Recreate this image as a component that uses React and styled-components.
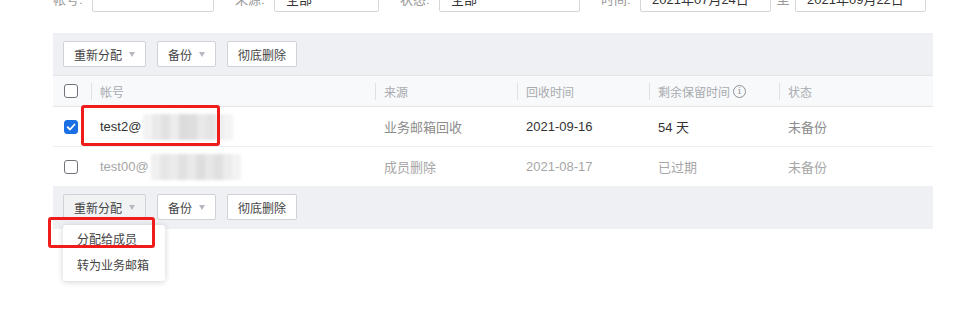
import React from 'react';
import styled, { createGlobalStyle } from 'styled-components';

const Global = createGlobalStyle`
  html, body { margin: 0; padding: 0; background: #fff; }
  body {
    font-family: "Liberation Sans", "Noto Sans CJK SC", sans-serif;
    overflow: hidden;
  }
`;

const Page = styled.div`
  width: 975px;
  height: 317px;
  padding-left: 53px;
  box-sizing: border-box;
  overflow: hidden;
`;

const FilterBar = styled.div`
  display: flex;
  align-items: center;
  height: 28px;
  margin-top: -16px;
`;

const Field = styled.div`
  display: flex;
  align-items: center;
  margin-right: 21px;
`;

const FieldLabel = styled.span`
  width: 39px;
  flex-shrink: 0;
  font-size: 13px;
  color: #999;
`;

const Input = styled.div`
  position: relative;
  box-sizing: border-box;
  width: ${(p) => p.$w}px;
  height: 28px;
  border: 1px solid #d3d6db;
  border-radius: 2px;
  padding-left: 11px;
  display: flex;
  align-items: center;
  font-size: 13px;
  color: #333;
  ${(p) =>
    p.$select &&
    `
    &::after {
      content: "";
      position: absolute;
      right: 12px;
      top: 11px;
      border-left: 3px solid transparent;
      border-right: 3px solid transparent;
      border-top: 4px solid #bbb;
    }
  `}
`;

const RangeSep = styled.span`
  width: 24px;
  text-align: center;
  font-size: 13px;
  color: #999;
`;

const Panel = styled.div`
  position: relative;
  width: 880px;
  margin-top: 21px;
`;

const Toolbar = styled.div`
  display: flex;
  gap: 11px;
  background: #eff0f3;
  padding: 8px 10px ${(p) => (p.$bottom ? 9 : 8)}px;
`;

const Button = styled.button`
  box-sizing: border-box;
  height: 26px;
  padding: 0 10px;
  display: inline-flex;
  align-items: center;
  border: 1px solid #cfd2d8;
  border-radius: 2px;
  background: ${(p) => (p.$active ? '#f1f2f4' : '#fff')};
  font-family: inherit;
  font-size: 12px;
  color: #444;
  cursor: pointer;
`;

const Caret = styled.span`
  display: inline-block;
  margin-left: 7px;
  border-left: 3.5px solid transparent;
  border-right: 3.5px solid transparent;
  border-top: 5px solid #b5b8be;
`;

const gridCols = '38px 284px 142px 132px 130px 1fr';

const HeaderRow = styled.div`
  display: grid;
  grid-template-columns: ${gridCols};
  box-sizing: border-box;
  height: 32px;
  background: #f8f9fb;
  border-top: 1px solid #e3e5e9;
  border-bottom: 1px solid #e3e5e9;
  align-items: center;
`;

const HeadCell = styled.div`
  position: relative;
  display: flex;
  align-items: center;
  padding-left: ${(p) => (p.$check ? 11 : 9)}px;
  font-size: 12px;
  color: #a8abb0;
  ${(p) =>
    !p.$check &&
    `
    &::before {
      content: "";
      position: absolute;
      left: 0;
      top: 50%;
      margin-top: -8px;
      height: 17px;
      border-left: 1px solid #dfe1e5;
    }
  `}
`;

const InfoIcon = styled.span`
  box-sizing: border-box;
  width: 13px;
  height: 13px;
  margin-left: 3px;
  border: 1px solid #8d9096;
  border-radius: 50%;
  font-size: 9px;
  line-height: 11px;
  text-align: center;
  color: #8d9096;
  font-family: "DejaVu Serif", serif;
`;

const Row = styled.div`
  display: grid;
  grid-template-columns: ${gridCols};
  box-sizing: border-box;
  height: 40px;
  align-items: center;
  background: #fff;
  border-bottom: 1px solid #eceef1;
  &:last-child {
    height: 39px;
    border-bottom: none;
  }
`;

const Cell = styled.div`
  display: flex;
  align-items: center;
  padding-left: ${(p) => (p.$check ? 11 : 9)}px;
  font-size: 13px;
  color: ${(p) => (p.$muted ? '#a6a6a6' : p.$soft ? '#8c8c8c' : '#333')};
  white-space: nowrap;
`;

const Checkbox = styled.span`
  box-sizing: border-box;
  width: 14px;
  height: 14px;
  border-radius: 3px;
  border: 1px solid ${(p) => (p.$checked ? '#1a6fe3' : '#6f7379')};
  background: ${(p) => (p.$checked ? '#1a6fe3' : '#fff')};
  display: inline-flex;
  align-items: center;
  justify-content: center;
`;

const Blur = styled.span`
  display: inline-flex;
  height: ${(p) => p.$h}px;
  filter: blur(1.5px);
  margin-left: 2px;
`;

const BlurBlock = styled.span`
  width: 9px;
  height: 100%;
  background: ${(p) => p.$c};
`;

const Menu = styled.div`
  position: absolute;
  left: 10px;
  top: 192px;
  width: 102px;
  padding: 2px 0;
  background: #fff;
  border-radius: 3px;
  box-shadow: 0 1px 6px rgba(0, 0, 0, 0.18);
  box-sizing: border-box;
`;

const MenuItem = styled.div`
  height: 26px;
  line-height: 26px;
  padding-left: 14px;
  font-size: 12px;
  color: #444;
  white-space: nowrap;
`;

const Mark = styled.div`
  position: absolute;
  box-sizing: border-box;
  border: 3px solid #f01c1c;
  border-radius: 3px;
  pointer-events: none;
`;

const blur1 = ['#f3f3f3', '#eaeaea', '#e2e2e2', '#ececec', '#dcdcdc', '#dedede', '#e9e9e9', '#e4e4e4', '#eeeeee', '#f4f4f4'];
const blur2 = ['#f0f0f0', '#e6e6e6', '#ebebeb', '#e1e1e1', '#e9e9e9', '#dedede', '#e7e7e7', '#e0e0e0', '#ececec', '#f3f3f3'];

const Check = () => (
  <svg width="10" height="10" viewBox="0 0 10 10">
    <path d="M1.6 5.2 L4 7.5 L8.5 2.5" fill="none" stroke="#fff" strokeWidth="1.8" strokeLinecap="round" strokeLinejoin="round" />
  </svg>
);

export default function App() {
  return (
    <>
      <Global />
      <Page>
        <FilterBar>
          <Field>
            <FieldLabel>帐号:</FieldLabel>
            <Input $w={122} />
          </Field>
          <Field>
            <FieldLabel>来源:</FieldLabel>
            <Input $w={105} $select>全部</Input>
          </Field>
          <Field>
            <FieldLabel>状态:</FieldLabel>
            <Input $w={141} $select>全部</Input>
          </Field>
          <Field>
            <FieldLabel>时间:</FieldLabel>
            <Input $w={131} $select>2021年07月24日</Input>
            <RangeSep>至</RangeSep>
            <Input $w={131} $select>2021年09月22日</Input>
          </Field>
        </FilterBar>

        <Panel>
          <Toolbar>
            <Button>重新分配<Caret /></Button>
            <Button>备份<Caret /></Button>
            <Button>彻底删除</Button>
          </Toolbar>

          <HeaderRow>
            <HeadCell $check><Checkbox /></HeadCell>
            <HeadCell>帐号</HeadCell>
            <HeadCell>来源</HeadCell>
            <HeadCell>回收时间</HeadCell>
            <HeadCell>剩余保留时间<InfoIcon>i</InfoIcon></HeadCell>
            <HeadCell>状态</HeadCell>
          </HeaderRow>

          <div>
            <Row>
              <Cell $check><Checkbox $checked><Check /></Checkbox></Cell>
              <Cell>
                test2@
                <Blur $h={26}>{blur1.map((c, i) => <BlurBlock key={i} $c={c} />)}</Blur>
              </Cell>
              <Cell $soft>业务邮箱回收</Cell>
              <Cell>2021-09-16</Cell>
              <Cell>54 天</Cell>
              <Cell $soft>未备份</Cell>
            </Row>
            <Row>
              <Cell $check><Checkbox /></Cell>
              <Cell $muted>
                test00@
                <Blur $h={26}>{blur2.map((c, i) => <BlurBlock key={i} $c={c} />)}</Blur>
              </Cell>
              <Cell $muted>成员删除</Cell>
              <Cell $muted>2021-08-17</Cell>
              <Cell $muted>已过期</Cell>
              <Cell $muted>未备份</Cell>
            </Row>
          </div>

          <Toolbar $bottom>
            <Button $active>重新分配<Caret /></Button>
            <Button>备份<Caret /></Button>
            <Button>彻底删除</Button>
          </Toolbar>

          <Menu>
            <MenuItem>分配给成员</MenuItem>
            <MenuItem>转为业务邮箱</MenuItem>
          </Menu>

          <Mark style={{ left: 28, top: 72, width: 139, height: 41 }} />
          <Mark style={{ left: -5, top: 184, width: 107, height: 31 }} />
        </Panel>
      </Page>
    </>
  );
}
